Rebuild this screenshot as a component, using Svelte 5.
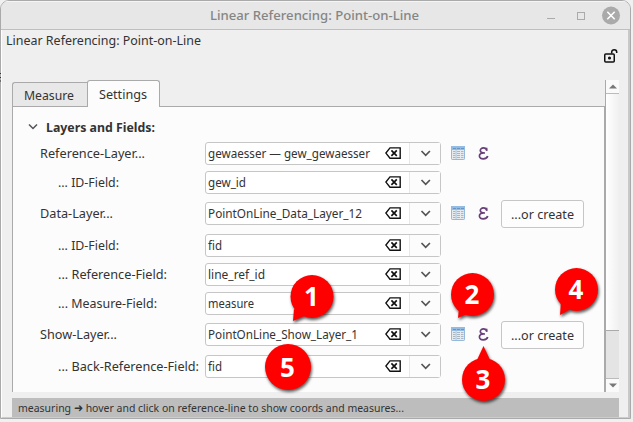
<script>
  const rows = [
    { label: 'Reference-Layer...', value: 'gewaesser — gew_gewaesser', lw: 105, vw: 162, gap: 0, layer: true },
    { label: '... ID-Field:', value: 'gew_id', lw: 61, vw: 38, gap: 6 },
    { label: 'Data-Layer...', value: 'PointOnLine_Data_Layer_12', lw: 73, vw: 154, gap: 8, layer: true, create: true },
    { label: '... ID-Field:', value: 'fid', lw: 61, vw: 14, gap: 9 },
    { label: '... Reference-Field:', value: 'line_ref_id', lw: 109, vw: 57, gap: 6 },
    { label: '... Measure-Field:', value: 'measure', lw: 99, vw: 46, gap: 6 },
    { label: 'Show-Layer...', value: 'PointOnLine_Show_Layer_1', lw: 77, vw: 150, gap: 8, layer: true, create: true },
    { label: '... Back-Reference-Field:', value: 'fid', lw: 141, vw: 14, gap: 9 }
  ];
  const callouts = [
    { n: 1, x: 312, y: 296.5, r: 21.5, tail: '294,309 293,321 309,314' },
    { n: 2, x: 472.5, y: 294.5, r: 21.5, tail: '459,308 458,318 469,313' },
    { n: 3, x: 483.5, y: 379.5, r: 21.5, tail: '476,362 483.5,346 491,362' },
    { n: 4, x: 576.5, y: 289.5, r: 21.5, tail: '561,301 560,315 573,308' },
    { n: 5, x: 288, y: 367, r: 23, tail: '' }
  ];
</script>

{#snippet fitted(text, width, size = 13)}
  <svg class="fitted" width={width} height="18"><text x="0" y="13" font-size={size} textLength={width} lengthAdjust="spacingAndGlyphs">{text}</text></svg>
{/snippet}

<div class="desktop">
  <div class="window">
    <header>
      <span class="title">{@render fitted('Linear Referencing: Point-on-Line', 209)}</span>
      <svg class="controls" width="80" height="20">
        <path d="M4 13.5h8" stroke="#aaa" />
        <rect x="34.5" y="7.5" width="7" height="7" fill="none" stroke="#aaa" />
        <circle cx="68" cy="10.5" r="9" fill="#aaa" />
        <path d="M64.3 6.8l7.4 7.4m0-7.4l-7.4 7.4" stroke="#fff" stroke-width="1.6" />
      </svg>
    </header>
    <div class="dock">
      <div class="caption">{@render fitted('Linear Referencing: Point-on-Line', 195)}
        <svg class="lock" width="16" height="16" fill="none" stroke="#111" stroke-width="1.5">
          <rect x="1.75" y="6" width="9.5" height="8" rx="1" />
          <path d="M8.7 5.5V4a2.5 2.3 0 0 1 5 0v1" />
          <circle cx="6.5" cy="10" r=".8" fill="#111" />
        </svg>
      </div>
      <div class="main">
        <div class="tabbed">
          <nav>
            <div class="tab">{@render fitted('Measure', 50)}</div>
            <div class="tab active">{@render fitted('Settings', 48)}</div>
          </nav>
          <section>
            <h2>
              <svg width="10" height="8"><path d="M1 .5l4 4 4-4" fill="none" stroke="#555" stroke-width="1.5" /></svg>
              {@render fitted('Layers and Fields:', 109)}
            </h2>
            {#each rows as row}
              <div class="row" style:margin-top="{row.gap}px">
                <div class="label" class:sub={row.label.startsWith('...')}>{@render fitted(row.label, row.lw)}</div>
                <div class="combo">
                  <div class="value">{@render fitted(row.value, row.vw, 12.8)}</div>
                  <svg class="clear" width="17" height="13" fill="none" stroke="#111" stroke-width="1.4">
                    <path d="M5 .9h10.2v10.4H5L.9 6.1z" />
                    <path d="M6.4 3.4l5.4 5.4m0-5.4l-5.4 5.4" stroke-width="1.7" />
                  </svg>
                  <div class="arrow"><svg width="11" height="8"><path d="M1.5 1l4.2 4.3L9.9 1" fill="none" stroke="#555" stroke-width="1.7" /></svg></div>
                </div>
                {#if row.layer}
                  <svg class="table" width="14" height="14">
                    <rect x=".5" y=".5" width="13" height="13" rx=".7" fill="#e7eaed" stroke="#94b9dd" />
                    <path d="M0 0h14v4H0z" fill="#94bce2" />
                    <path d="M2 2.5h3m1 0h3m1 0h3" stroke="#6696c8" />
                    <path d="M2 5.5h2.5m1.5 0h3m1 0h2.5M2 7.5h2.5m1.5 0h3m1 0h2.5M2 9.5h2.5m1.5 0h3m1 0h2.5M2 11.5h2.5m1.5 0h3m1 0h2.5" stroke="#acb6c0" />
                    <path d="M5.1 4v9" stroke="#a9c6e2" />
                  </svg>
                  <svg class="epsilon" width="11" height="13" viewBox="0 0 11 13" fill="none" stroke="#68417b">
                    <path d="M8.6 3.4C8.3.2 2.3 0 2.3 3.5c0 2 1.9 2.5 4.7 2.5M6 6c-3 0-4.6 1.1-4.6 3.1 0 3.8 7.5 3.4 8.3-.1" stroke-width="1.7" />
                    <path d="M8.8.7v3.2" stroke-width="1.3" />
                  </svg>
                {/if}
                {#if row.create}<button>{@render fitted('...or create', 63)}</button>{/if}
              </div>
            {/each}
          </section>
        </div>
        <div class="scrollbar">
          <div class="step"><svg width="8" height="5"><path d="M0 4.5L4 .5l4 4z" fill="#777" /></svg></div>
          <div class="thumb"></div>
          <div class="trough"></div>
          <div class="step down"><svg width="8" height="5"><path d="M0 .5l4 4 4-4z" fill="#777" /></svg></div>
        </div>
      </div>
      <footer>{@render fitted('measuring ➜ hover and click on reference-line to show coords and measures...', 386, 11.5)}</footer>
    </div>
  </div>
  <svg class="callouts" width="633" height="422">
    {#each callouts as c}
      <g class="callout">
        <circle cx={c.x} cy={c.y} r={c.r} />
        {#if c.tail}<polygon points={c.tail} />{/if}
      </g>
      <text x={c.x - 0.5} y={c.y + 9.5} text-anchor="middle">{c.n}</text>
    {/each}
    <path d="M0 73.5h1M0 77.5h1M0 81h1" stroke="#333" stroke-width="1.2" />
  </svg>
</div>

<style>
  :global(body) { margin: 0; overflow: hidden; }
  * { box-sizing: border-box; }
  .desktop { position: relative; width: 633px; height: 422px; padding: 0 2px 3px 0; background: #f0f0f0; font-family: "Noto Sans", "Open Sans", sans-serif; color: #333; }
  .window { width: 631px; height: 419px; display: flex; flex-direction: column; border: 1px solid #aaa; border-radius: 9px 9px 0 0; background: #efefef; overflow: hidden; }
  .fitted { display: block; flex: none; overflow: visible; fill: currentColor; }
  header { height: 29px; flex: none; display: flex; align-items: center; justify-content: space-between; padding: 0 7px 0 209px; background: #e7e7e7; border-top: 1px solid #f5f5f5; border-bottom: 1px solid #bfbfbf; color: #858585; }
  .controls { margin-top: -1px; }
  .title { font-weight: 500; }
  .dock { flex: 1; min-height: 0; border: solid; border-width: 0 2px 1px 1px; border-color: #fff #c8c8c8 #ccc #fff; display: flex; flex-direction: column; }
  .caption { height: 50px; flex: none; padding: 2px 9px 0 4px; display: flex; justify-content: space-between; }
  .lock { margin-top: 16px; }
  .main { display: flex; height: 312px; padding-left: 10px; }
  .tabbed { width: 593px; display: flex; flex-direction: column; }
  nav { display: flex; align-items: flex-end; height: 27px; flex: none; position: relative; z-index: 1; }
  .tab { height: 24px; width: 76px; margin-bottom: 1px; padding: 4px 0 0 11px; background: #e8e8e8; border: 1px solid #aaa; border-bottom: 0; border-right: 0; border-radius: 3px 0 0 0; }
  .tab.active { width: 73px; height: 27px; margin: 0 0 0 -1px; padding: 5px 0 0 11px; background: #fcfcfc; border-right: 1px solid #aaa; border-radius: 3px 3px 0 0; }
  section { flex: 1; margin-top: -1px; border: 1px solid #aaa; border-bottom: 0; background: #fcfcfc; padding-top: 12px; }
  h2 { display: flex; align-items: center; gap: 8px; height: 18px; margin: 0 0 5px; padding-left: 15px; font-size: 13px; font-weight: 700; }
  .row { display: flex; align-items: center; height: 23px; padding-left: 27px; }
  .label { width: 165px; flex: none; padding-top: 1px; }
  .label.sub { padding-left: 18px; }
  .combo { width: 236px; height: 23px; flex: none; display: flex; align-items: center; background: #fff; border: 1px solid #c6c6c6; border-radius: 3px; }
  .value { flex: 1; padding-left: 2px; }
  .clear { margin-right: 7px; }
  .arrow { width: 31px; height: 21px; display: flex; align-items: center; justify-content: center; border-left: 1px solid #e8e8e8; background: #fcfcfc; padding-top: 1px; }
  .table { margin: -1px 0 0 10px; flex: none; }
  .epsilon { margin: 0 0 0 13px; flex: none; }
  button { width: 83px; height: 28px; flex: none; margin-left: 12px; padding: 2px 0 0 9px; border: 1px solid #c6c6c6; border-radius: 3px; background: #fdfdfd; color: inherit; font: inherit; }
  .scrollbar { width: 14px; display: flex; flex-direction: column; border-left: 1px solid #aaa; }
  .step { height: 14px; display: flex; align-items: center; justify-content: center; background: #fafafa; border-bottom: 1px solid #bbb; }
  .step.down { border: 0; border-top: 1px solid #bbb; }
  .thumb { height: 237px; background: linear-gradient(90deg, #fff, #f0f0f0); border-bottom: 1px solid #aaa; }
  .trough { flex: 1; background: #e4e4e4; }
  footer { width: 607px; height: 19px; margin: 6px 0 0 10px; padding: 1px 0 0 6px; background: #bdbdbd; }
  .callouts { position: absolute; left: 0; top: 0; }
  .callout { fill: #fe0000; filter: drop-shadow(1.5px 2px 1.5px rgb(0 0 0 / .65)); }
  .callouts text { fill: #fff; font: 700 26px "Noto Sans", sans-serif; }
</style>
